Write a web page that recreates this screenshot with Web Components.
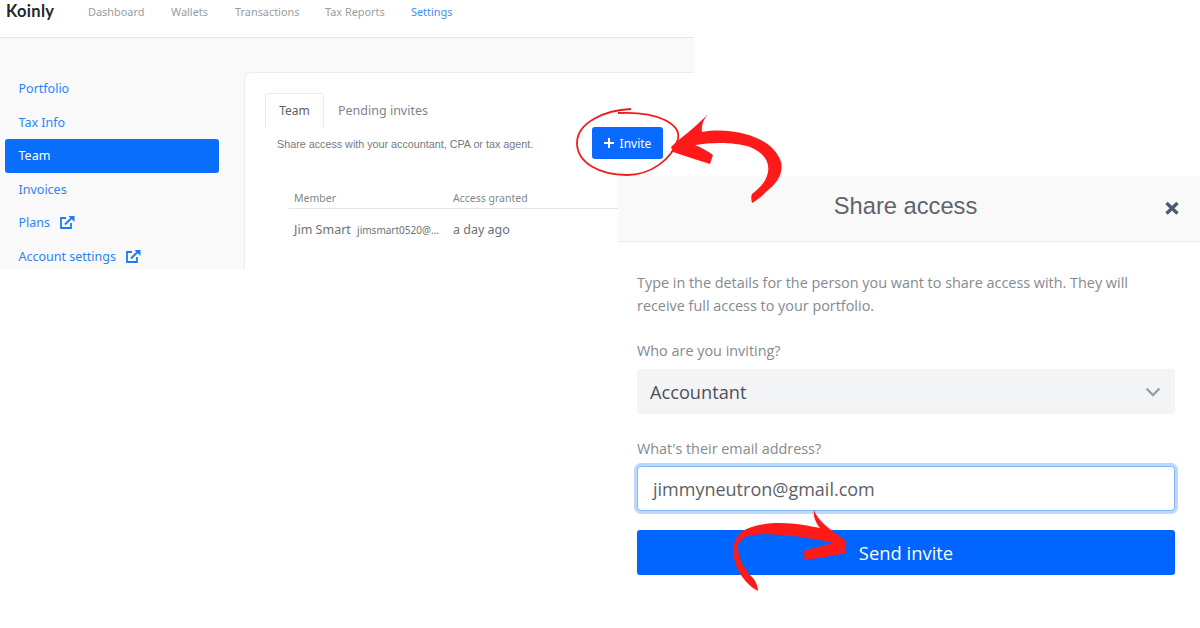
<!DOCTYPE html>
<html lang="en">
<head>
<meta charset="utf-8">
<title>Koinly - Share access</title>
<style>
  html, body { margin: 0; background: #fff; }
  body { width: 1200px; height: 628px; overflow: hidden; position: relative; font-family: "Open Sans", "Noto Sans", sans-serif; }
  koinly-app { position: absolute; left: 0; top: 0; }
  share-modal { position: absolute; left: 618px; top: 176px; }
  red-marks { position: absolute; left: 0; top: 0; }
</style>
</head>
<body>
<koinly-app></koinly-app>
<share-modal></share-modal>
<red-marks></red-marks>

<script>
// Barra superior con el logo y los enlaces
class TopBar extends HTMLElement {
  constructor() {
    super();
    this.attachShadow({ mode: 'open' });
    this.links = [
      { label: 'Dashboard', w: 83 },
      { label: 'Wallets', w: 64 },
      { label: 'Transactions', w: 90 },
      { label: 'Tax Reports', w: 86 },
      { label: 'Settings', w: 60, active: true }
    ];
  }

  connectedCallback() {
    this.shadowRoot.innerHTML = `
      <style>
        :host { display: flex; height: 37px; background: #fff; border-bottom: 1px solid #e4e4e4; box-sizing: content-box; font-family: "Noto Sans", sans-serif; }
        .logo { font: 700 16.5px/23px Lato, sans-serif; color: #24272c; margin: 0 0 0 6px; width: 82px; letter-spacing: .3px; }
        a { display: block; font-size: 10.9px; line-height: 24px; color: #9a9da1; flex: none; }
        a.active { color: #3d8ff8; }
      </style>
      <div class="logo">Koinly</div>
      ${this.links.map(l => `<a class="${l.active ? 'active' : ''}" style="width:${l.w}px">${l.label}</a>`).join('')}
    `;
  }
}

// Menu lateral de ajustes
class SideNav extends HTMLElement {
  constructor() {
    super();
    this.attachShadow({ mode: 'open' });
    this.items = [
      { label: 'Portfolio' },
      { label: 'Tax Info' },
      { label: 'Team', active: true },
      { label: 'Invoices' },
      { label: 'Plans', ext: true },
      { label: 'Account settings', ext: true }
    ];
  }

  connectedCallback() {
    const ext = `<svg width="16" height="15" viewBox="0 0 16 15"><path d="M7 3H2v10h10V8" fill="none" stroke="#1c7cf8" stroke-width="1.8"/><path d="M6 9.5 13 2.5" stroke="#1c7cf8" stroke-width="2"/><path d="M9.5 1h6v6z" fill="#1c7cf8"/></svg>`;
    this.shadowRoot.innerHTML = `
      <style>
        :host { display: block; width: 214px; margin: 34px 0 0 5px; flex: none; font-family: "Noto Sans", sans-serif; }
        a { display: flex; align-items: center; gap: 9px; height: 33.5px; padding-left: 13.5px; box-sizing: border-box; font-size: 12.5px; color: #2b84f7; border-radius: 3px; }
        a.active { background: #0a6efd; color: #fff; }
      </style>
      ${this.items.map(i => `<a class="${i.active ? 'active' : ''}">${i.label}${i.ext ? ext : ''}</a>`).join('')}
    `;
  }
}

// Tarjeta con pestañas y tabla de miembros
class TeamCard extends HTMLElement {
  constructor() {
    super();
    this.attachShadow({ mode: 'open' });
  }

  connectedCallback() {
    this.shadowRoot.innerHTML = `
      <style>
        :host { display: block; margin: 34px 0 0 25px; width: 461px; height: 197px; overflow: hidden; box-sizing: border-box; background: #fff; border: 1px solid #ececec; border-radius: 7px 0 0 0; border-right: 0; border-bottom: 0; font-family: "Noto Sans", sans-serif; }
        .tabs { display: flex; margin: 20px 0 0 20px; height: 35px; font-size: 12px; }
        .tab { line-height: 35px; padding: 0 14px; color: #7f848a; font-size: 12.5px; }
        .tab.on { width: 59px; padding: 0; box-sizing: border-box; text-align: center; color: #5a6068; border: 1px solid #ececec; border-bottom: 0; border-radius: 3px 3px 0 0; font-size: 12px; line-height: 34px; }
        .bar { display: flex; align-items: flex-start; margin: -1px 0 0 32px; height: 32px; }
        .bar p { margin: 0; width: 315px; font: 10.75px/34px "Liberation Sans", Arial, sans-serif; color: #757a80; }
        .invite { display: flex; align-items: center; justify-content: center; gap: 6px; width: 71px; height: 32px; background: #0a6aff; color: #fff; font-size: 12px; border-radius: 3px; }
        .invite svg { display: block; }
        .grid { margin: 31px 0 0 44px; width: 340px; font-size: 10.5px; }
        .head { display: flex; height: 18px; line-height: 16px; color: #83878d; border-bottom: 1px solid #e5e5e5; padding-left: 5px; }
        .row { display: flex; align-items: center; height: 41px; padding-left: 5px; color: #6e7277; font-size: 12.5px; }
        .c1 { width: 159px; flex: none; }
        .mail { font-size: 10px; margin-left: 3px; }
      </style>
      <div class="tabs"><div class="tab on">Team</div><div class="tab">Pending invites</div></div>
      <div class="bar">
        <p>Share access with your accountant, CPA or tax agent.</p>
        <div class="invite"><svg width="10" height="10" viewBox="0 0 10 10"><path d="M5 0v10M0 5h10" stroke="#fff" stroke-width="2"/></svg><span>Invite</span></div>
      </div>
      <div class="grid">
        <div class="head"><div class="c1">Member</div><div>Access granted</div></div>
        <div class="row"><div class="c1">Jim Smart <span class="mail">jimsmart0520@...</span></div><div>a day ago</div></div>
      </div>
    `;
  }
}

// Recorte de la aplicacion
class KoinlyApp extends HTMLElement {
  constructor() {
    super();
    this.attachShadow({ mode: 'open' });
  }

  connectedCallback() {
    this.shadowRoot.innerHTML = `
      <style>
        :host { display: block; width: 694px; height: 269px; overflow: hidden; background: #f9f9f9; }
        .main { display: flex; }
      </style>
      <top-bar></top-bar>
      <div class="main"><side-nav></side-nav><team-card></team-card></div>
    `;
  }
}

// Dialogo para compartir acceso
class ShareModal extends HTMLElement {
  constructor() {
    super();
    this.attachShadow({ mode: 'open' });
  }

  connectedCallback() {
    this.shadowRoot.innerHTML = `
      <style>
        :host { display: block; width: 582px; height: 452px; background: #fff; font-family: "Open Sans", "Noto Sans", sans-serif; }
        header { display: flex; align-items: center; height: 65px; background: #f9f9f9; border-bottom: 1px solid #efefef; box-sizing: content-box; }
        h2 { flex: 1; margin: 0 0 4px 0; padding-left: 29px; text-align: center; font: 400 23.7px "Liberation Sans", Arial, sans-serif; color: #5f646b; }
        .close { width: 16px; margin: 0 20px 2px 0; }
        .close svg { display: block; }
        .body { padding: 29px 25px 0 19px; color: #858a90; font-size: 14.4px; }
        p { margin: 0; line-height: 23px; }
        label { display: block; line-height: 22px; margin: 23px 0 7px; }
        .select, .email { display: flex; align-items: center; height: 45px; box-sizing: border-box; border-radius: 4px; }
        .select { justify-content: space-between; padding: 0 14px 0 13px; background: #f3f4f6; color: #4d5157; font-size: 18.2px; }
        .email { padding-left: 15px; background: #fff; border: 1px solid #86b7fe; box-shadow: 0 0 0 3px #bcd8fe; color: #5c6167; font-size: 18px; }
        label.second { margin-top: 24px; margin-bottom: 6px; }
        button { display: block; width: 100%; height: 45px; margin-top: 19px; border: 0; border-radius: 3px; background: #0065ff; color: #fff; font: 18.4px "Open Sans", "Noto Sans", sans-serif; }
      </style>
      <header>
        <h2>Share access</h2>
        <div class="close"><svg width="16" height="16" viewBox="0 0 16 16"><path d="M2.5 3 13.5 13.5M13.5 3 2.5 13.5" stroke="#4c5a73" stroke-width="3.4"/></svg></div>
      </header>
      <div class="body">
        <p>Type in the details for the person you want to share access with. They will receive full access to your portfolio.</p>
        <label>Who are you inviting?</label>
        <div class="select"><span>Accountant</span><svg width="16" height="10" viewBox="0 0 16 10"><path d="M1.5 1.5 8 8l6.5-6.5" fill="none" stroke="#9a9ea4" stroke-width="2.4"/></svg></div>
        <label class="second">What's their email address?</label>
        <div class="email">jimmyneutron@gmail.com</div>
        <button>Send invite</button>
      </div>
    `;
  }
}

// Circulo y flechas rojas dibujados encima de todo
class RedMarks extends HTMLElement {
  constructor() {
    super();
    this.attachShadow({ mode: 'open' });
  }

  connectedCallback() {
    this.shadowRoot.innerHTML = `
      <style>
        :host { display: block; width: 1200px; height: 628px; pointer-events: none; }
        svg { display: block; }
      </style>
      <svg width="1200" height="628" viewBox="0 0 1200 628">
        <path d="M631 109C606 110 577 122 577 143C577 163 600 175 627 175C650 175 672 160 678 139C681 125 660 111 618 113" fill="none" stroke="#f01c1c" stroke-width="1.8"/>
        <path fill="#ff1a1a" d="M708 114C703 120 701 126 702 132C718 129 733 131 745 134C765 139 777 150 781 162C784 175 775 185 767 191C762 196 757 200 752 203C751 199 751 196 752 194C760 188 766 182 768 172C770 160 762 152 750 147C735 142 712 142 695 145C702 148 708 151 713 155L710 164C697 160 685 156 673 152L671 147C680 138 695 128 708 114Z"/>
        <path fill="#ff1a1a" d="M814 510C817 520 830 530 845 540L846 553C832 556 818 558 805 560L803 551L833 543C815 538 770 532 753 535C742 537 737 542 738 549C739 560 745 570 753 578C756 582 758 586 758 591L753 588C745 582 737 572 734 558C732 548 734 540 740 533C748 526 765 523 780 523C795 523 810 526 820 528C816 523 813 517 814 510Z"/>
      </svg>
    `;
  }
}

customElements.define('top-bar', TopBar);
customElements.define('side-nav', SideNav);
customElements.define('team-card', TeamCard);
customElements.define('koinly-app', KoinlyApp);
customElements.define('share-modal', ShareModal);
customElements.define('red-marks', RedMarks);
</script>
</body>
</html>
